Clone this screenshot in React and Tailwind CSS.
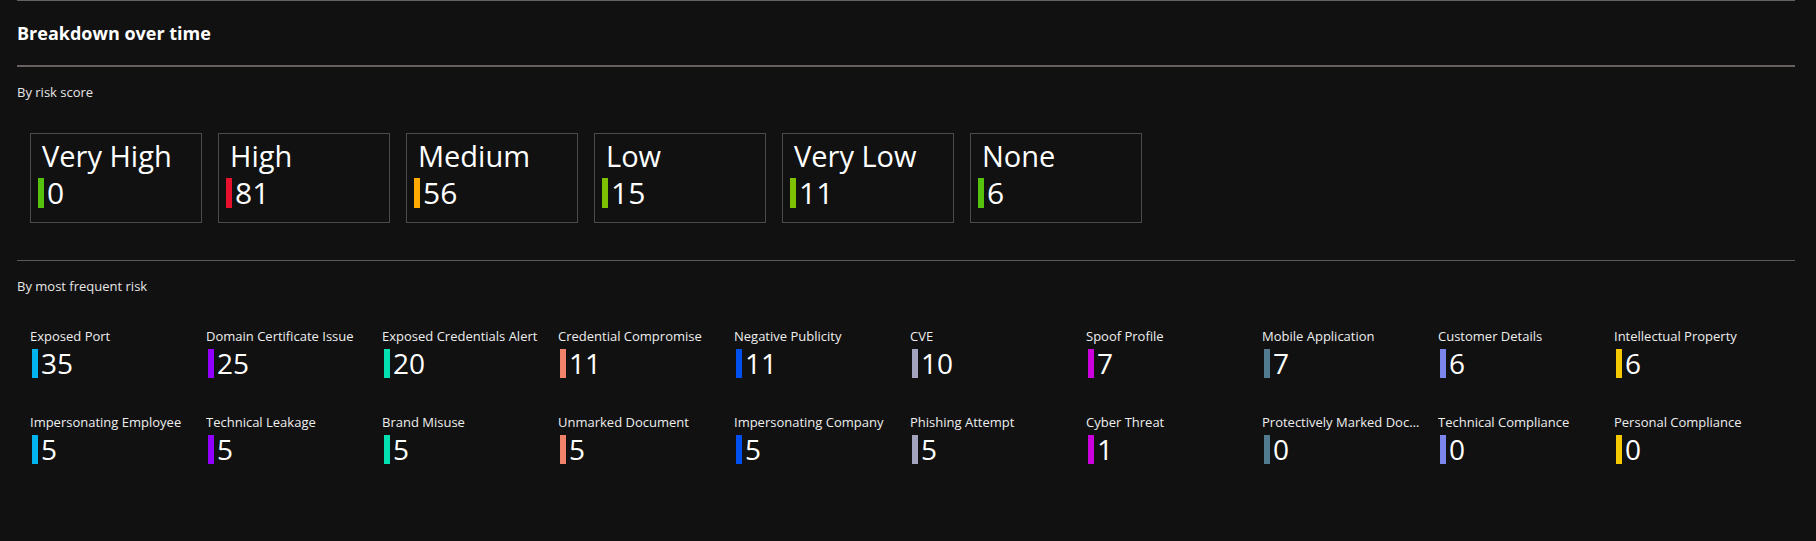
import React from 'react'

const scores = [
  { label: 'Very High', value: 0, color: 'bg-[#55c30d]' },
  { label: 'High', value: 81, color: 'bg-[#e8112d]' },
  { label: 'Medium', value: 56, color: 'bg-[#ffaa00]' },
  { label: 'Low', value: 15, color: 'bg-[#7dc100]' },
  { label: 'Very Low', value: 11, color: 'bg-[#7dc100]' },
  { label: 'None', value: 6, color: 'bg-[#55c30d]' },
]

// one colour per column, shared by both rows
const colors = [
  'bg-[#00b4f0]',
  'bg-[#9100ff]',
  'bg-[#00e0b0]',
  'bg-[#f2836b]',
  'bg-[#0050ef]',
  'bg-[#a3a3bd]',
  'bg-[#cc00dd]',
  'bg-[#517c8f]',
  'bg-[#7b85ec]',
  'bg-[#f5c800]',
]

const risks = [
  ['Exposed Port', 35],
  ['Domain Certificate Issue', 25],
  ['Exposed Credentials Alert', 20],
  ['Credential Compromise', 11],
  ['Negative Publicity', 11],
  ['CVE', 10],
  ['Spoof Profile', 7],
  ['Mobile Application', 7],
  ['Customer Details', 6],
  ['Intellectual Property', 6],
  ['Impersonating Employee', 5],
  ['Technical Leakage', 5],
  ['Brand Misuse', 5],
  ['Unmarked Document', 5],
  ['Impersonating Company', 5],
  ['Phishing Attempt', 5],
  ['Cyber Threat', 1],
  ['Protectively Marked Document', 0],
  ['Technical Compliance', 0],
  ['Personal Compliance', 0],
]

function ScoreCard({ label, value, color }) {
  return (
    <div className="w-[172px] h-[90px] border border-[#4b4b4b] pt-[4px]">
      <div className="pl-[11px] text-[29px] leading-[36px] text-white">{label}</div>
      <div className="flex items-start gap-[3px] pl-[7px] mt-[4px]">
        <div className={`w-[6px] h-[30px] ${color}`} />
        <span className="text-[30px] leading-[30px] text-white">{value}</span>
      </div>
    </div>
  )
}

function RiskItem({ label, value, color }) {
  return (
    <div className="w-[176px]">
      <div className="max-w-[158px] truncate text-[13px] leading-[18px] text-[#eeeeee]">{label}</div>
      <div className="flex items-start gap-[3px] pl-[2px] mt-[4px]">
        <div className={`w-[6px] h-[29px] ${color}`} />
        <span className="text-[28px] leading-[29px] text-white">{value}</span>
      </div>
    </div>
  )
}

export default function App() {
  return (
    <div className="bg-[#111111] w-full h-[541px] pl-[17px] pr-[21px] font-['Open_Sans',sans-serif] overflow-hidden">
      <div className="border-t border-[#66615e]" />
      <h2 className="mt-[19px] text-[18px] leading-[26px] font-bold text-white">Breakdown over time</h2>
      <div className="mt-[19px] border-t-2 border-[#66615e]" />

      {/* By risk score */}
      <div className="mt-[16px] text-[13px] leading-[18px] text-[#e6e6e6]">By risk score</div>
      <div className="mt-[32px] pl-[13px] flex gap-[16px]">
        {scores.map(s => (
          <ScoreCard key={s.label} {...s} />
        ))}
      </div>

      <div className="mt-[37px] border-t border-[#5a5a5a]" />

      {/* By most frequent risk */}
      <div className="mt-[16px] text-[13px] leading-[18px] text-[#e6e6e6]">By most frequent risk</div>
      <div className="mt-[32px] pl-[13px] grid grid-cols-[repeat(10,176px)] gap-y-[35px]">
        {risks.map(([label, value], i) => (
          <RiskItem key={label} label={label} value={value} color={colors[i % 10]} />
        ))}
      </div>
    </div>
  )
}
